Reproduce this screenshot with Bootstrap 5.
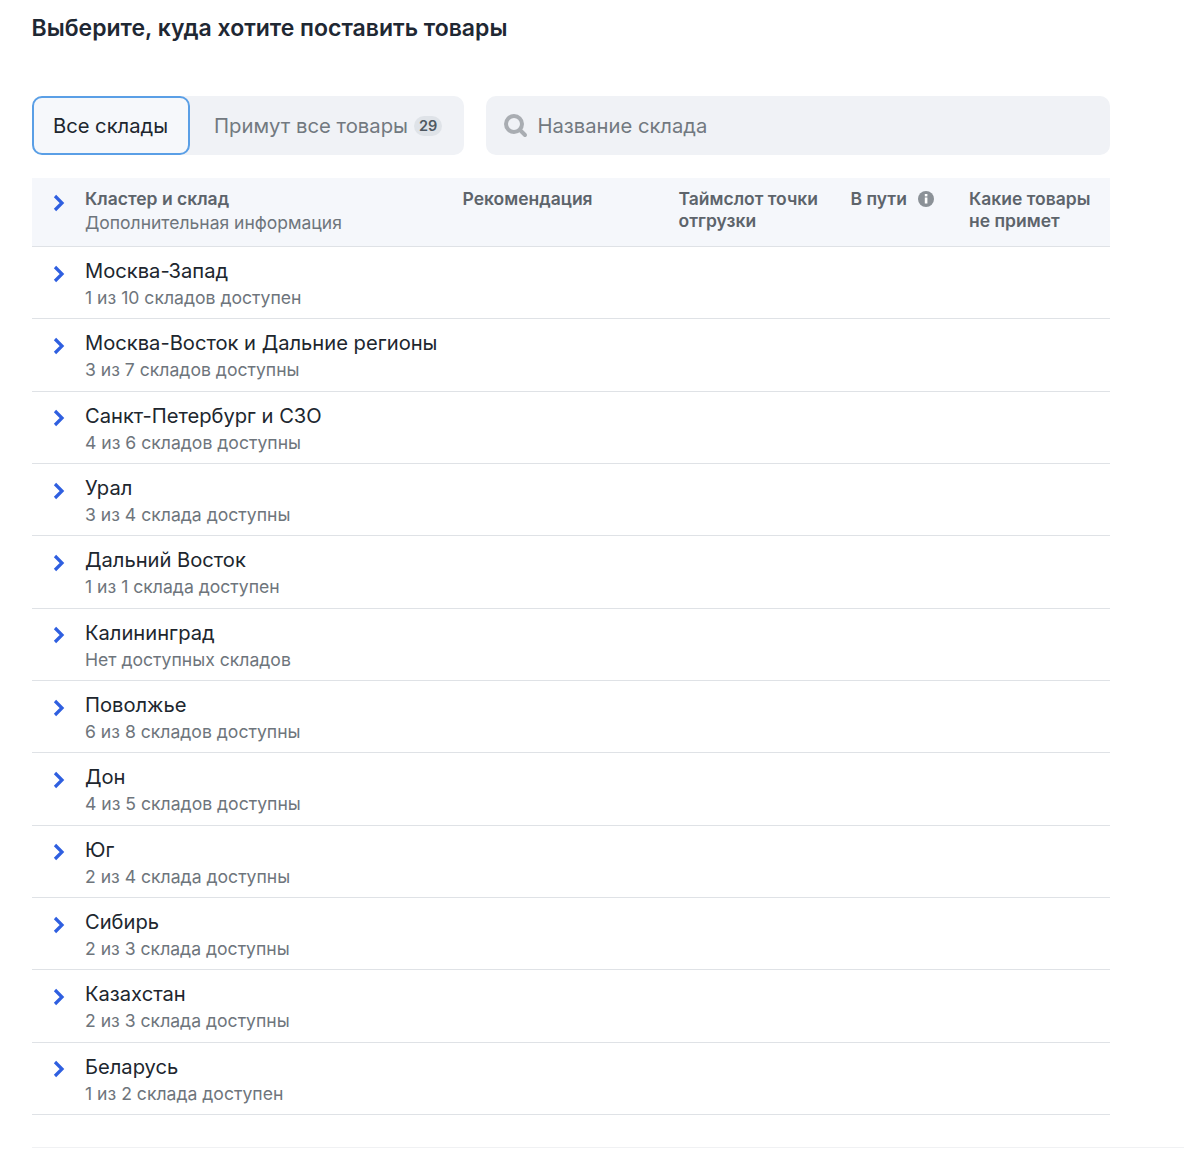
<!DOCTYPE html>
<html lang="ru">
<head>
    <meta charset="UTF-8">
    <title>Склады</title>
    <link href="https://cdn.jsdelivr.net/npm/bootstrap@5.3.3/dist/css/bootstrap.min.css" rel="stylesheet">
    <style>
        body { font-family: Inter, "Liberation Sans", sans-serif; background: #fff; color: #20262e; }
        .page-wrap { width: 1078px; margin-left: 31.5px; padding-top: 14px; }
        .page-title { font-size: 23px; line-height: 28px; font-weight: 600; color: #1f2833; margin: 0 0 54px; }
        .filter-bar { height: 59px; margin-bottom: 23px; gap: 22px; }
        .seg-group { width: 432.5px; background: #f0f2f6; border-radius: 10px; }
        .seg-active { width: 158px; background: #f6f8fb; border: 2.5px solid #5a9fe6; border-radius: 10px; font-size: 20.2px; color: #20262e; padding-top: 1px; }
        .seg-other { font-size: 20.3px; color: #727980; padding-left: 24.5px; padding-top: 1px; gap: 6px; }
        .seg-count { font-size: 14.5px; font-weight: 600; line-height: 20px; padding: 0 5px; border-radius: 10px; background: #dfe3e8; color: #4f5861; }
        .search-box { flex: 1; background: #f0f2f6; border-radius: 10px; padding-left: 15.5px; padding-top: 1px; gap: 10px; font-size: 20.2px; color: #727980; }
        .search-icon { margin-top: -2px; }
        .table-head { height: 69px; background: #f5f7fb; border-bottom: 1px solid #dfe2e6; font-size: 17.5px; line-height: 22px; font-weight: 600; color: #5d646b; padding-top: 10px; }
        .head-sub { font-weight: 400; color: #6e757c; font-size: 17.5px; line-height: 26px; }
        .arrow-cell { width: 53.5px; padding-left: 21px; flex-shrink: 0; }
        .head-arrow { margin-top: 6px; }
        .col-name { width: 377.5px; }
        .col-rec { width: 216px; }
        .col-slot { width: 172px; }
        .col-way { width: 118.5px; gap: 9px; }
        .cluster-row { height: 72.35px; border-bottom: 1px solid #dfe2e6; padding-top: 10px; }
        .cluster-name { font-size: 20.15px; line-height: 28px; color: #20262e; }
        .cluster-info { font-size: 17.6px; line-height: 26px; color: #6e757c; }
        .row-arrow { margin-top: 6px; }
        .page-end { height: 33px; border-bottom: 1px solid #f0f1f3; width: 1152px; }
    </style>
</head>
<body>
<div class="page-wrap">
    <h1 class="page-title">Выберите, куда хотите поставить товары</h1>

    <div class="filter-bar d-flex">
        <div class="seg-group d-flex">
            <div class="seg-active d-flex align-items-center justify-content-center">Все склады</div>
            <div class="seg-other d-flex align-items-center">Примут все товары <span class="seg-count">29</span></div>
        </div>
        <div class="search-box d-flex align-items-center">
            <svg width="26" height="26" viewBox="0 0 26 26" fill="none" stroke="#a9adb2" class="search-icon">
                <circle cx="12" cy="12" r="8" stroke-width="4"/>
                <path d="M18 18l5 5" stroke-width="4" stroke-linecap="round"/>
            </svg>
            <span>Название склада</span>
        </div>
    </div>

    <div class="table-head d-flex">
        <div class="arrow-cell">
            <svg width="12" height="18" viewBox="0 0 12 18" fill="none" stroke="#2f5fe0" stroke-width="3.2" class="head-arrow">
                <path d="M2 2l7 7-7 7"/>
            </svg>
        </div>
        <div class="col-name">
            <div>Кластер и склад</div>
            <div class="head-sub">Дополнительная информация</div>
        </div>
        <div class="col-rec">Рекомендация</div>
        <div class="col-slot">Таймслот точки отгрузки</div>
        <div class="col-way d-flex">
            <span>В пути</span>
            <svg width="20" height="22" viewBox="0 0 20 22">
                <circle cx="10" cy="11" r="8" fill="#8b9197"/>
                <rect x="8.8" y="9.5" width="2.6" height="6" fill="#fff"/>
                <rect x="8.8" y="6" width="2.6" height="2.4" fill="#fff"/>
            </svg>
        </div>
        <div>Какие товары<br>не примет</div>
    </div>

    <div id="cluster-list"></div>
    <div class="page-end"></div>
</div>

<script>
    const clusters = [
        ['Москва-Запад', '1 из 10 складов доступен'],
        ['Москва-Восток и Дальние регионы', '3 из 7 складов доступны'],
        ['Санкт-Петербург и СЗО', '4 из 6 складов доступны'],
        ['Урал', '3 из 4 склада доступны'],
        ['Дальний Восток', '1 из 1 склада доступен'],
        ['Калининград', 'Нет доступных складов'],
        ['Поволжье', '6 из 8 складов доступны'],
        ['Дон', '4 из 5 складов доступны'],
        ['Юг', '2 из 4 склада доступны'],
        ['Сибирь', '2 из 3 склада доступны'],
        ['Казахстан', '2 из 3 склада доступны'],
        ['Беларусь', '1 из 2 склада доступен']
    ];

    const lista = document.getElementById('cluster-list');
    clusters.forEach(c => {
        const row = document.createElement('div');
        row.className = 'cluster-row d-flex';
        row.innerHTML = `
            <div class="arrow-cell">
                <svg width="12" height="18" viewBox="0 0 12 18" fill="none" stroke="#2f5fe0" stroke-width="3.2" class="row-arrow">
                    <path d="M2 2l7 7-7 7"/>
                </svg>
            </div>
            <div>
                <div class="cluster-name">${c[0]}</div>
                <div class="cluster-info">${c[1]}</div>
            </div>`;
        lista.appendChild(row);
    });
</script>
<script src="https://cdn.jsdelivr.net/npm/bootstrap@5.3.3/dist/js/bootstrap.bundle.min.js"></script>
</body>
</html>
